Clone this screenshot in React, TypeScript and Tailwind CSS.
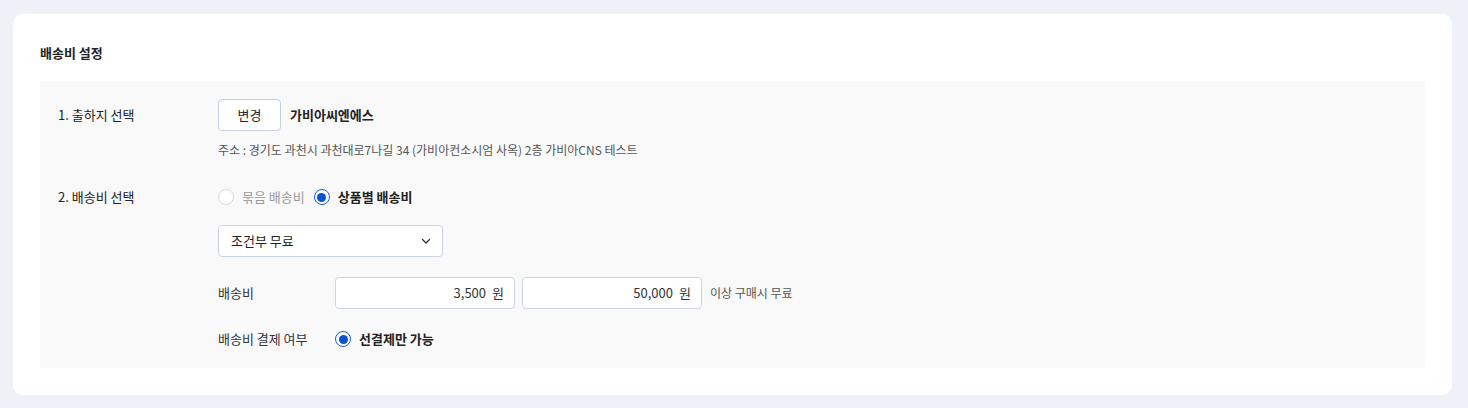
const font = { fontFamily: '"Noto Sans CJK KR", "Noto Sans", sans-serif' };

function Radio({ checked, disabled, label }: { checked?: boolean; disabled?: boolean; label: string }) {
  return (
    <label className="flex items-center gap-2">
      {checked ? (
        <span className="w-4 h-4 rounded-full border-[1.5px] border-[#1a5fd8] bg-white flex items-center justify-center">
          <span className="w-[9px] h-[9px] rounded-full bg-[#0a52d0]" />
        </span>
      ) : (
        <span className="w-4 h-4 rounded-full border border-[#d6dbe3] bg-white" />
      )}
      <span
        className={
          disabled
            ? 'text-[13px] text-[#9a9a9a]'
            : 'text-[13px] font-semibold text-[#222]'
        }
      >
        {label}
      </span>
    </label>
  );
}

function PriceInput({ value }: { value: string }) {
  return (
    <div className="w-[180px] h-8 rounded border border-[#cdd4e2] bg-white flex items-center justify-end pr-[10px] text-[13px] text-[#333]">
      <span>{value}</span>
      <span className="ml-[6px]">원</span>
    </div>
  );
}

export default function App() {
  return (
    <div className="min-h-[408px] bg-[#eef1f7] pt-[14px] pl-[13px] pr-[16px] pb-[14px] w-[1468px]" style={font}>
      <section className="bg-white rounded-[10px] px-[27px] pt-[29px] pb-[27px]">
        <h2 className="text-[13px] font-bold text-[#222] leading-5 mb-[18px]">배송비 설정</h2>

        <div className="bg-[#f9f9f9] rounded-[3px] pl-[18px] pt-[18px] pb-[19px]">
          {/* 출하지 선택 */}
          <div className="flex">
            <div className="w-[160px] h-8 flex items-center text-[13px] text-[#222]">1. 출하지 선택</div>
            <div className="flex flex-col">
              <div className="flex items-center gap-[9px]">
                <button className="w-[63px] h-8 rounded border border-[#c5d0e2] bg-white text-[13px] text-[#222]">
                  변경
                </button>
                <span className="text-[13px] font-semibold text-[#222]">가비아씨엔에스</span>
              </div>
              <p className="mt-[9px] text-[12px] text-[#555] leading-5">
                주소 : 경기도 과천시 과천대로7나길 34 (가비아컨소시엄 사옥) 2층 가비아CNS 테스트
              </p>
            </div>
          </div>

          {/* 배송비 선택 */}
          <div className="flex mt-[27px]">
            <div className="w-[160px] h-5 flex items-center text-[13px] text-[#222]">2. 배송비 선택</div>
            <div className="flex flex-col">
              <div className="flex items-center gap-[9px] h-5">
                <Radio disabled label="묶음 배송비" />
                <Radio checked label="상품별 배송비" />
              </div>

              <div className="mt-[18px] w-[225px] h-8 rounded border border-[#cdd4e2] bg-white flex items-center justify-between pl-3 pr-[10px]">
                <span className="text-[13px] text-[#222]">조건부 무료</span>
                <svg width="12" height="12" viewBox="0 0 12 12" fill="none">
                  <path d="M2.5 4.5L6 8l3.5-3.5" stroke="#333" strokeWidth="1.3" strokeLinecap="round" strokeLinejoin="round" />
                </svg>
              </div>

              <div className="mt-[20px] flex items-center">
                <span className="w-[117px] text-[13px] text-[#333]">배송비</span>
                <div className="flex items-center gap-[7px]">
                  <PriceInput value="3,500" />
                  <PriceInput value="50,000" />
                </div>
                <span className="ml-2 text-[12px] text-[#555]">이상 구매시 무료</span>
              </div>

              <div className="mt-[20px] flex items-center h-5">
                <span className="w-[117px] text-[13px] text-[#333]">배송비 결제 여부</span>
                <Radio checked label="선결제만 가능" />
              </div>
            </div>
          </div>
        </div>
      </section>
    </div>
  );
}
